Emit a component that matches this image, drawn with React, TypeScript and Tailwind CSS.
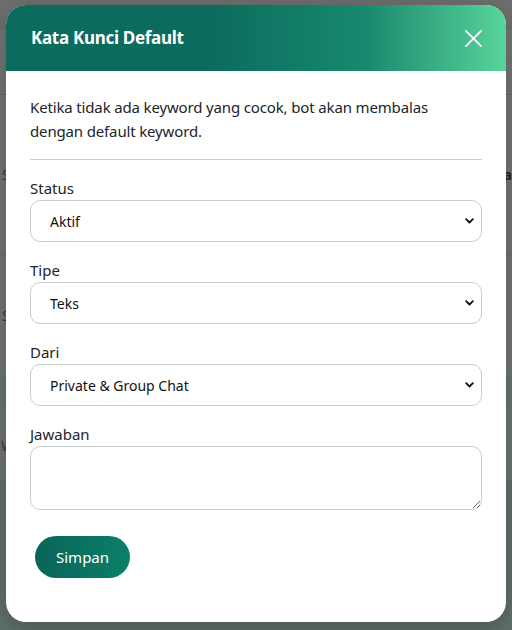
import type { ReactNode } from "react";

type FieldProps = {
  label: string;
  children: ReactNode;
};

function Field({ label, children }: FieldProps) {
  return (
    <div className="flex flex-col">
      <label className="text-[15px] leading-[22px] text-[#212529] mb-[1px]">{label}</label>
      {children}
    </div>
  );
}

function Chevron() {
  return (
    <svg
      viewBox="0 0 12 8"
      className="pointer-events-none absolute right-[8px] top-1/2 -translate-y-1/2 w-[9px] h-[6px]"
      fill="none"
      stroke="#111"
      strokeWidth="2.4"
      strokeLinecap="round"
      strokeLinejoin="round"
    >
      <path d="M1.5 1.5 6 6l4.5-4.5" />
    </svg>
  );
}

function SelectBox({ value, options }: { value: string; options: string[] }) {
  return (
    <div className="relative">
      <select
        defaultValue={value}
        className="w-full h-[42px] appearance-none rounded-[10px] border border-[#c4d0cf] bg-white pl-[19px] pr-8 text-[14px] text-[#111] outline-none"
      >
        {options.map((o) => (
          <option key={o}>{o}</option>
        ))}
      </select>
      <Chevron />
    </div>
  );
}

export default function App() {
  return (
    <div
      className="relative w-[512px] h-[630px] overflow-hidden bg-[#60716c]"
      style={{ fontFamily: '"Noto Sans", "Open Sans", sans-serif' }}
    >
      {/* dimmed page behind the dialog */}
      <div className="flex flex-col text-[#3a3a3a]">
        <div className="h-[30px] bg-[#6e7070]" />
        <div className="h-[65px] bg-[#737776] border-b border-[#666]" />
        <div className="h-[160px] bg-[#737776] border-b border-[#6a6d6c] flex items-center justify-between pl-[2px] pr-0">
          <span className="text-[15px]">S</span>
          <span className="text-[14px] font-bold text-[#222]">a</span>
        </div>
        <div className="h-[120px] bg-[#737776] flex items-center pl-[2px]">
          <span className="text-[15px]">S</span>
        </div>
        <div className="h-[35px] bg-[#66786f]" />
        <div className="h-[70px] bg-[#6e7572] flex items-center pl-[1px]">
          <span className="text-[15px]">W</span>
        </div>
        <div className="flex-1 bg-[#5f716b]" />
      </div>

      {/* dialog */}
      <div className="absolute left-[6px] top-[5px] w-[500px] h-[617px] rounded-[20px] bg-white overflow-hidden shadow-[0_8px_30px_rgba(0,0,0,0.25)]">
        <div className="h-[66px] flex items-center justify-between pl-[25px] pr-[23px] bg-linear-to-r from-[#0b6b5d] from-40% via-[#18896f] via-72% to-[#58d49a]">
          <h2 className="text-[17px] font-bold text-white tracking-[-0.3px]">Kata Kunci Default</h2>
          <svg viewBox="0 0 20 20" className="w-[19px] h-[19px]" stroke="white" strokeWidth="1.8" strokeLinecap="round">
            <path d="M2 2l16 16M18 2 2 18" />
          </svg>
        </div>

        <div className="px-[24px] pt-[24px]">
          <p className="pr-[30px] text-[15px] leading-[24px] text-[#212529] tracking-[-0.15px]">
            Ketika tidak ada keyword yang cocok, bot akan membalas dengan default keyword.
          </p>
          <hr className="mt-[16px] mb-[17px] border-[#cfcfcf]" />

          <div className="flex flex-col gap-[17px]">
            <Field label="Status">
              <SelectBox value="Aktif" options={["Aktif", "Nonaktif"]} />
            </Field>
            <Field label="Tipe">
              <SelectBox value="Teks" options={["Teks", "Gambar"]} />
            </Field>
            <Field label="Dari">
              <SelectBox
                value="Private & Group Chat"
                options={["Private & Group Chat", "Private Chat", "Group Chat"]}
              />
            </Field>
            <Field label="Jawaban">
              <textarea className="w-full h-[64px] rounded-[10px] border border-[#c4d0cf] bg-white px-[12px] py-[8px] text-[14px] outline-none" />
            </Field>
          </div>

          <button className="mt-[26px] ml-[5px] h-[42px] px-[21px] rounded-full bg-linear-to-r from-[#0b6459] to-[#0a8068] text-white text-[15px]">
            Simpan
          </button>
        </div>
      </div>
    </div>
  );
}
